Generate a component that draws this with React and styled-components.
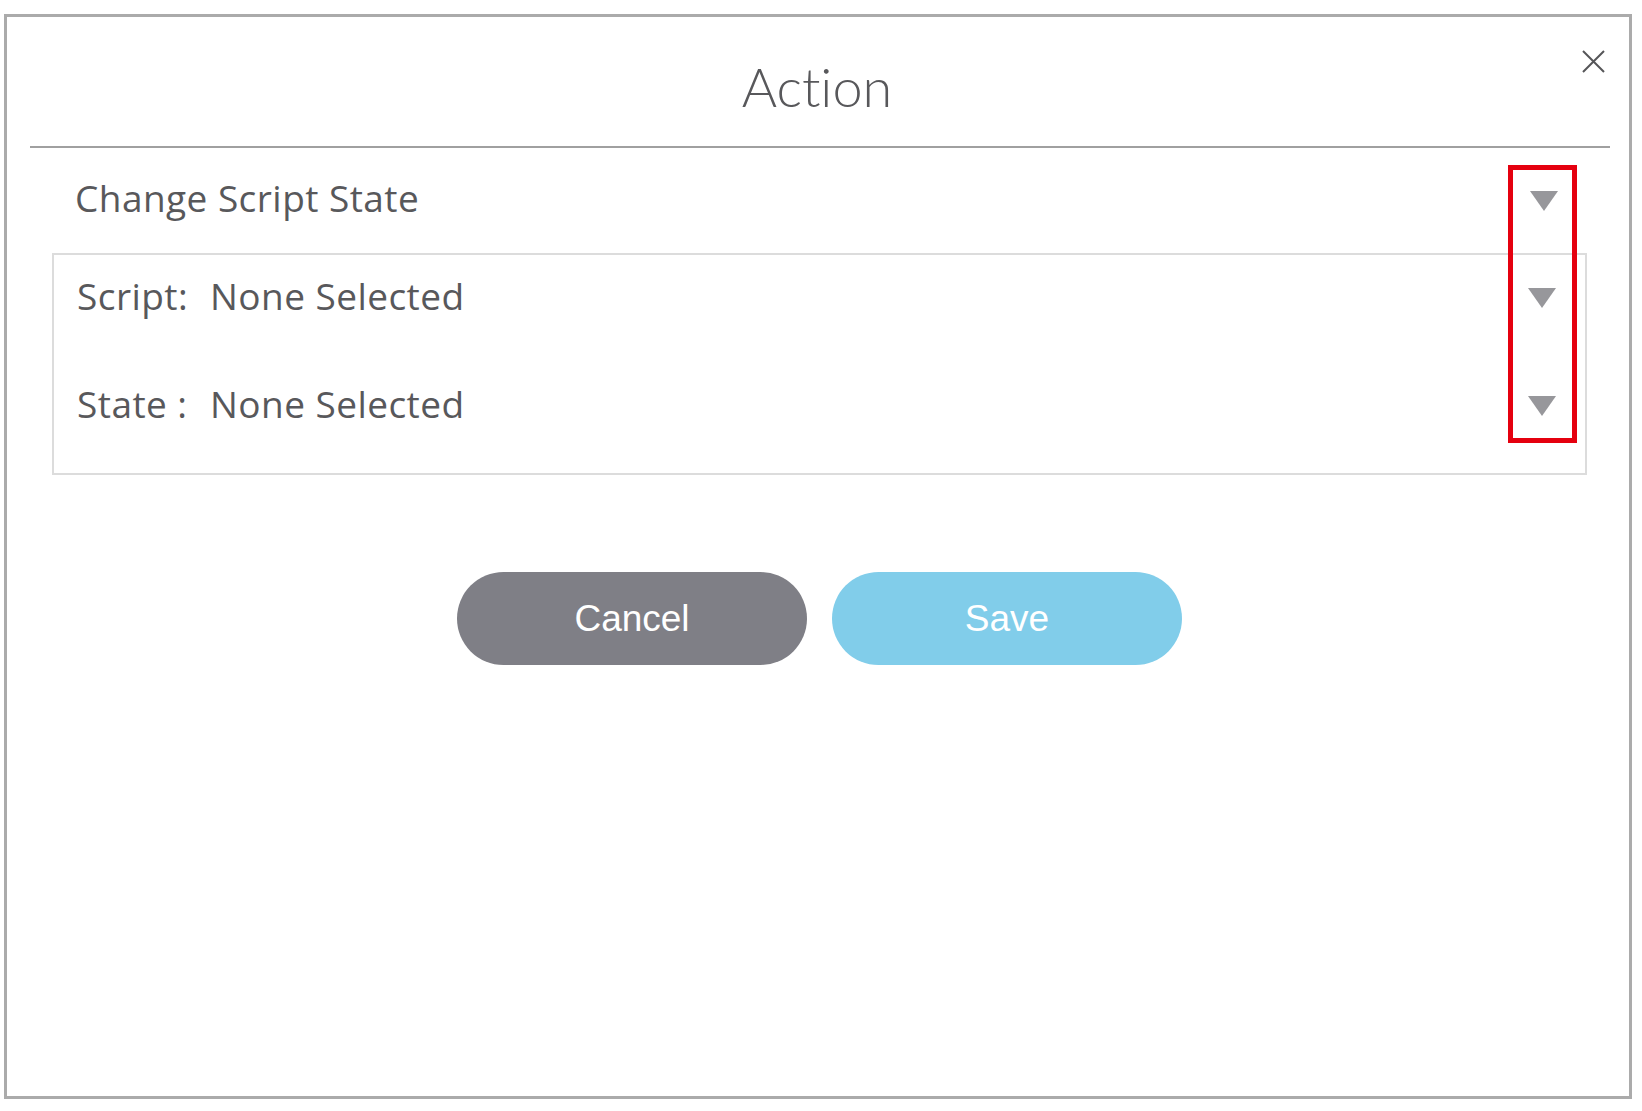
import React from "react";
import styled, { createGlobalStyle } from "styled-components";

const GlobalStyle = createGlobalStyle`
  html, body {
    margin: 0;
    padding: 0;
    background: #ffffff;
  }
  body {
    font-family: "Open Sans", "Liberation Sans", sans-serif;
    color: #58585b;
  }
`;

const Page = styled.div`
  padding: 14px 0 0 4px;
`;

const Dialog = styled.div`
  position: relative;
  box-sizing: border-box;
  width: 1628px;
  height: 1085px;
  border: 3px solid #ababab;
  background: #ffffff;
  display: flex;
  flex-direction: column;
`;

const Header = styled.header`
  position: relative;
  height: 129px;
  margin: 0 19px 0 23px;
  border-bottom: 2px solid #a0a0a0;
  display: flex;
  justify-content: center;
`;

const Title = styled.h1`
  margin: 0 6px 0 0;
  padding-top: 43px;
  font-family: "Lato", "Open Sans", sans-serif;
  font-weight: 300;
  font-size: 54px;
  line-height: 54px;
  color: #58585b;
  font-variant-ligatures: none;
  font-feature-settings: "liga" 0;
`;

const CloseButton = styled.button`
  position: absolute;
  top: 33px;
  right: 5px;
  width: 23px;
  height: 23px;
  padding: 0;
  border: none;
  background: transparent;
  display: flex;
  cursor: pointer;
`;

const SectionRow = styled.div`
  display: flex;
  align-items: center;
  justify-content: space-between;
  padding: 28px 71px 33px 68px;
`;

const Text = styled.span`
  font-size: 37px;
  line-height: 44px;
  letter-spacing: 0.45px;
  color: #58585b;
  white-space: pre;
`;

const Caret = styled.svg`
  display: block;
  flex: none;
  margin-top: ${(p) => p.$nudge}px;
`;

const FieldBox = styled.div`
  margin: 0 42px 0 45px;
  border: 2px solid #dcdcdc;
  padding: 19px 29px 47px 23px;
  display: flex;
  flex-direction: column;
  gap: 64px;
`;

const FieldRow = styled.div`
  display: flex;
  align-items: center;
  height: 44px;
`;

const Label = styled(Text)`
  width: 133px;
  flex: none;
`;

const Value = styled(Text)`
  flex: 1;
`;

const Actions = styled.div`
  display: flex;
  justify-content: center;
  gap: 25px;
  margin: 97px 0 0 3px;
`;

const PillButton = styled.button`
  width: 350px;
  height: 93px;
  border: none;
  border-radius: 47px;
  background: ${(p) => p.$bg};
  color: #ffffff;
  font-family: "Liberation Sans", Arial, sans-serif;
  font-size: 37px;
  line-height: 1;
  padding: 0;
  cursor: pointer;
`;

const Highlight = styled.div`
  position: absolute;
  left: 1501px;
  top: 148px;
  width: 69px;
  height: 278px;
  box-sizing: border-box;
  border: 5px solid #e5000f;
  pointer-events: none;
`;

const DownCaret = ({ nudge = 0 }) => (
  <Caret $nudge={nudge} width="28" height="20" viewBox="0 0 28 20">
    <polygon points="0,0 28,0 14,20" fill="#97979b" />
  </Caret>
);

const fields = [
  { label: "Script:", value: "None Selected" },
  { label: "State :", value: "None Selected" },
];

export default function App() {
  return (
    <>
      <GlobalStyle />
      <Page>
        <Dialog>
          <Header>
            <Title>Action</Title>
            <CloseButton aria-label="Close">
              <svg width="23" height="23" viewBox="0 0 23 23">
                <path
                  d="M1 1 L22 22 M22 1 L1 22"
                  stroke="#555558"
                  strokeWidth="2"
                  fill="none"
                />
              </svg>
            </CloseButton>
          </Header>
          <SectionRow>
            <Text>Change Script State</Text>
            <DownCaret nudge={5} />
          </SectionRow>
          <FieldBox>
            {fields.map((f) => (
              <FieldRow key={f.label}>
                <Label>{f.label}</Label>
                <Value>{f.value}</Value>
                <DownCaret nudge={4} />
              </FieldRow>
            ))}
          </FieldBox>
          <Actions>
            <PillButton $bg="#7f7f86">Cancel</PillButton>
            <PillButton $bg="#81cdea">Save</PillButton>
          </Actions>
          <Highlight />
        </Dialog>
      </Page>
    </>
  );
}
